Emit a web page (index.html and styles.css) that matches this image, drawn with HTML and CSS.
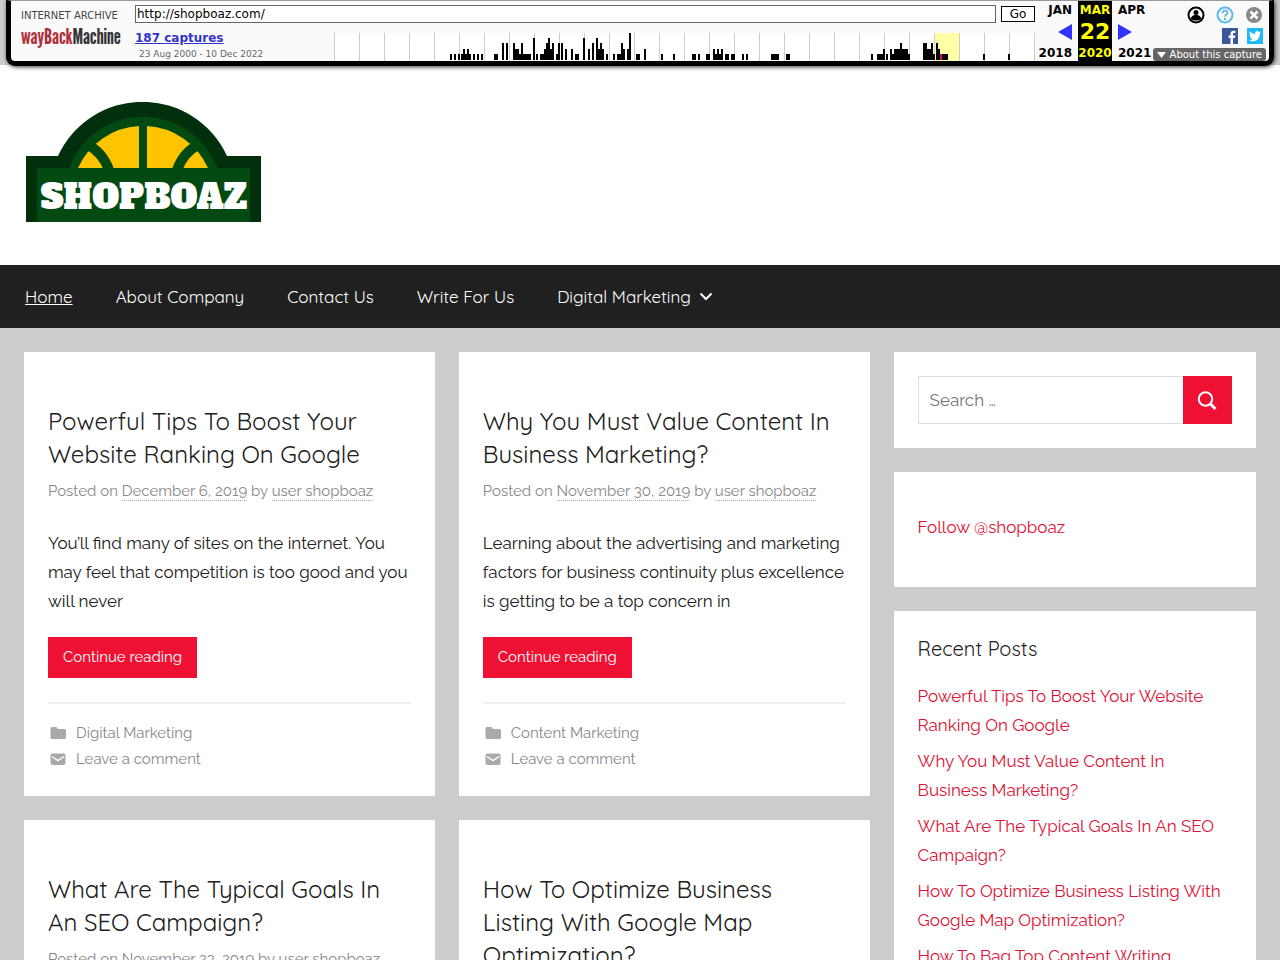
FILE: index.html
```html
<!DOCTYPE html>
<html lang="en">
<head>
    <meta charset="UTF-8">
    <meta name="viewport" content="width=device-width, initial-scale=1.0">
    <title>Shopboaz</title>
    <link rel="stylesheet" href="styles.css">
</head>
<body>
    <!-- Archive toolbar -->
    <div class="archive-bar">
        <a class="archive-logo" href="#">
            <svg width="104" height="44" viewBox="0 0 104 44">
                <text class="logo-small" x="0" y="9">INTERNET ARCHIVE</text>
                <text class="logo-big" x="0" y="34"><tspan fill="#b0303a">wayBack</tspan><tspan fill="#333">Machine</tspan></text>
            </svg>
        </a>
        <div class="archive-main">
            <form class="archive-form">
                <input type="text" class="archive-url" aria-label="Archive URL" value="http://shopboaz.com/">
                <button type="button" class="archive-go">Go</button>
            </form>
            <div class="archive-row">
                <div class="captures">
                    <a href="#">187 captures</a>
                    <div class="range">23 Aug 2000 - 10 Dec 2022</div>
                </div>
                <svg class="sparkline" viewBox="0 0 701 28" preserveAspectRatio="none">
                    <path fill="#fff" d="M0 0h701v28H0z"/>
                    <path fill="#ffffa5" d="M600 0h25v28h-25z"/>
                    <path stroke="#ccc" d="M.5 0v28M25.500 0v28M50.500 0v28M75.500 0v28M100.500 0v28M125.500 0v28M150.500 0v28M175.500 0v28M200.500 0v28M225.500 0v28M250.500 0v28M275.500 0v28M300.500 0v28M325.500 0v28M350.500 0v28M375.500 0v28M400.500 0v28M425.500 0v28M450.500 0v28M475.500 0v28M500.500 0v28M525.500 0v28M550.500 0v28M575.500 0v28M600.500 0v28M625.500 0v28M650.500 0v28M675.500 0v28M700.500 0v28"/>
                    <path stroke="#000" stroke-width="6" d="M116 24h2m2 0h2m2 0h2m1 0h10m2 0h2m2 0h2m2 0h2M160 24h4M185 24h2m2 0h8M202 24h2m2 0h4M222 24h2M241 24h4M272 24h2M279 24h2m2 0h4M302 24h4M327 24h2M339 24h2M358 24h4m2 0h2M372 24h4M381 24h8m2 0h4m2 0h4M408 24h2m2 0h2M437 24h8M452 24h4M537 24h2M543 24h8m1 0h2m2 0h20M599 24h2M608 24h6M649 24h2M674 24h2"/>
                    <path stroke="#000" stroke-width="11" d="M129 21.500h2m2 0h2M181 21.500h4M210 21.500h10M231 21.500h2M237 21.500h2M254 21.500h2M264 21.500h6M287 21.500h4m2 0h4M310 21.500h2M379 21.500h2m2 0h2m2 0h2M549 21.500h2M556 21.500h2m2 0h14M593 21.500h4M604 21.500h2"/>
                    <path stroke="#000" stroke-width="17" d="M168 18.500h2m2 0h2M179 18.500h2M187 18.500h2M212 18.500h4m2 0h2M224 18.500h2m1 0h2M258 18.500h2M266 18.500h2M287 18.500h2M566 18.500h2M589 18.500h4m4 0h2m3 0h2"/>
                    <path stroke="#000" stroke-width="22" d="M199 16h2M214 16h2M249 16h2M262 16h2"/>
                    <path fill="#000" d="M295 0h2v27h-2z"/>
                    <path fill="#e0006e" d="M606 21h2v6h-2z"/>
                </svg>
            </div>
        </div>
        <div class="archive-dates">
            <div class="date prev">
                <a href="#">JAN</a>
                <svg width="14" height="16" viewBox="0 0 14 16"><path fill="#33f" d="M14 0v16L0 8z"/></svg>
                <b>2018</b>
            </div>
            <div class="date now">
                <b>MAR</b>
                <b class="day">22</b>
                <b>2020</b>
            </div>
            <div class="date next">
                <a href="#">APR</a>
                <svg width="14" height="16" viewBox="0 0 14 16"><path fill="#33f" d="M0 0v16l14-8z"/></svg>
                <b>2021</b>
            </div>
        </div>
        <div class="archive-tools">
            <div class="tool-row top">
                <svg width="18" height="18" viewBox="0 0 18 18"><circle cx="9" cy="9" r="7.500" fill="none" stroke="#000" stroke-width="2"/><circle cx="9" cy="6.500" r="2.500"/><path d="M4 13c0-3 2-4 5-4s5 1 5 4c-3 2-7 2-10 0z"/></svg>
                <svg width="18" height="18" viewBox="0 0 18 18"><circle cx="9" cy="9" r="7.500" fill="none" stroke="#5db8f0" stroke-width="2"/><path d="M6.500 7.200c0-3.600 5-3.200 5-.4C11.500 8.600 9 8.600 9 10.800" fill="none" stroke="#5db8f0" stroke-width="1.800"/><circle cx="9" cy="13" r="1.200" fill="#5db8f0"/></svg>
                <svg width="18" height="18" viewBox="0 0 18 18"><circle cx="9" cy="9" r="8" fill="#888"/><path d="M5.500 5.500l7 7m0-7l-7 7" stroke="#fff" stroke-width="2.500"/></svg>
            </div>
            <div class="tool-row">
                <svg width="16" height="16" viewBox="0 0 16 16"><path fill="#3b5998" d="M0 0h16v16H0z"/><path fill="#fff" d="M8.500 16v-6H6.600V7.600h1.900V6c0-2.300 1.200-3.300 3-3.300h1.900V5H12c-.8 0-1 .4-1 1v1.600h2.300L13 10h-2v6z"/></svg>
                <svg width="16" height="16" viewBox="0 0 16 16"><path fill="#1dbaf5" d="M0 0h16v16H0z"/><path fill="#fff" d="M14 4.300c-.5.200-.9.300-1.400.4.500-.3.900-.8 1.100-1.400-.5.300-1 .5-1.600.6C10.500 2.200 7.500 3.400 8 6.200 6 6.100 4.100 5.100 2.900 3.600c-.8 1.300-.3 2.600.7 3.400-.4 0-.8-.1-1.100-.3 0 1.200.9 2.200 2 2.500-.4.100-.7.100-1.100 0 .3 1 1.200 1.700 2.300 1.700-1 .8-2.300 1.200-3.700 1.100 5.300 3.200 11-.4 10.800-6.300.5-.4.900-.8 1.200-1.400z"/></svg>
            </div>
            <button type="button" class="about"><svg width="9" height="6" viewBox="0 0 9 6"><path fill="#fff" d="M0 0h9L4.500 6z"/></svg>About this capture</button>
        </div>
    </div>

    <header class="site-header">
        <a href="#" class="site-logo">
            <svg width="235" height="120" viewBox="0 0 235 120">
                <path fill="#022f0c" d="M0 54h32A93 93 0 0 1 201 54h34v66H0z"/>
                <path fill="#034a12" d="M11 66h32A79 79 0 0 1 191 66h33v54H11z"/>
                <path fill="#ffc400" d="M52 66A71 71 0 0 1 113 24v42zM182 66A71 71 0 0 0 121 24v42z"/>
                <path fill="none" stroke="#034a12" stroke-width="10" d="M62 43c10 5 17 14 21 25M172 43c-10 5-17 14-21 25"/>
                <text class="brand" x="118" y="107" text-anchor="middle">SHOPBOAZ</text>
            </svg>
        </a>
    </header>

    <nav class="main-nav">
        <a href="#" class="current">Home</a>
        <a href="#">About Company</a>
        <a href="#">Contact Us</a>
        <a href="#">Write For Us</a>
        <a href="#">Digital Marketing <svg width="14" height="9" viewBox="0 0 14 9"><path d="M1.500 1.500L7 7l5.500-5.500" fill="none" stroke="#fff" stroke-width="2"/></svg></a>
    </nav>

    <div class="site-content">
        <main class="posts">
            <article class="post">
                <h2><a href="#">Powerful Tips To Boost Your Website Ranking On Google</a></h2>
                <div class="meta">Posted on <a href="#">December 6, 2019</a> by <a href="#">user shopboaz</a></div>
                <p>You’ll find many of sites on the internet. You may feel that competition is too good and you will never</p>
                <a href="#" class="more">Continue reading</a>
                <footer>
                    <div><svg width="20" height="20" viewBox="0 0 20 20"><path fill="#aaa" d="M4 4h4.500L10 6h6.500q1.500 0 1.500 1.500v7q0 1.500-1.500 1.500H4q-1.500 0-1.500-1.500v-9Q2.500 4 4 4z"/></svg><a href="#">Digital Marketing</a></div>
                    <div><svg width="20" height="20" viewBox="0 0 20 20"><rect x="2.500" y="4.500" width="15" height="11.500" rx="2" fill="#aaa"/><path d="M4 7.500l6 4 6-4" fill="none" stroke="#fff" stroke-width="1.500"/></svg><a href="#">Leave a comment</a></div>
                </footer>
            </article>
            <article class="post">
                <h2><a href="#">Why You Must Value Content In Business Marketing?</a></h2>
                <div class="meta">Posted on <a href="#">November 30, 2019</a> by <a href="#">user shopboaz</a></div>
                <p>Learning about the advertising and marketing factors for business continuity plus excellence is getting to be a top concern in</p>
                <a href="#" class="more">Continue reading</a>
                <footer>
                    <div><svg width="20" height="20" viewBox="0 0 20 20"><path fill="#aaa" d="M4 4h4.500L10 6h6.500q1.500 0 1.500 1.500v7q0 1.500-1.500 1.500H4q-1.500 0-1.500-1.500v-9Q2.500 4 4 4z"/></svg><a href="#">Content Marketing</a></div>
                    <div><svg width="20" height="20" viewBox="0 0 20 20"><rect x="2.500" y="4.500" width="15" height="11.500" rx="2" fill="#aaa"/><path d="M4 7.500l6 4 6-4" fill="none" stroke="#fff" stroke-width="1.500"/></svg><a href="#">Leave a comment</a></div>
                </footer>
            </article>
            <article class="post">
                <h2><a href="#">What Are The Typical Goals In An SEO Campaign?</a></h2>
                <div class="meta">Posted on <a href="#">November 23, 2019</a> by <a href="#">user shopboaz</a></div>
            </article>
            <article class="post">
                <h2><a href="#">How To Optimize Business Listing With Google Map Optimization?</a></h2>
            </article>
        </main>

        <aside class="sidebar">
            <section class="widget">
                <form class="search">
                    <input type="search" placeholder="Search …" aria-label="Search">
                    <button type="button" aria-label="Search"><svg width="22" height="22" viewBox="0 0 22 22"><circle cx="8.500" cy="10" r="6.700" fill="none" stroke="#fff" stroke-width="2"/><path d="M13 14.500l5.500 5.500" stroke="#fff" stroke-width="3"/></svg></button>
                </form>
            </section>
            <section class="widget follow">
                <a href="#">Follow @shopboaz</a>
            </section>
            <section class="widget">
                <h3>Recent Posts</h3>
                <ul>
                    <li><a href="#">Powerful Tips To Boost Your Website Ranking On Google</a></li>
                    <li><a href="#">Why You Must Value Content In Business Marketing?</a></li>
                    <li><a href="#">What Are The Typical Goals In An SEO Campaign?</a></li>
                    <li><a href="#">How To Optimize Business Listing With Google Map Optimization?</a></li>
                    <li><a href="#">How To Bag Top Content Writing</a></li>
                </ul>
            </section>
        </aside>
    </div>
</body>
</html>
```
FILE: styles.css
```css
:root {
    --accent: #ee1133;
    --link: #dd1133;
    --dark: #202020;
    --muted: #888;
    --body-font: Raleway, Lato, sans-serif;
    --title-font: Quicksand, Lato, sans-serif;
}
* {
    box-sizing: border-box;
}
body {
    margin: 0;
    background: #ccc;
    color: var(--dark);
    font-family: var(--body-font);
    font-size: 17px;
    line-height: 29px;
}
a {
    color: inherit;
    text-decoration: none;
}
svg {
    display: block;
    flex: none;
}

/* Archive toolbar */
.archive-bar {
    position: relative;
    display: flex;
    height: 66px;
    margin: 0 6px -1px;
    padding: 0 3px 0 10px;
    background: #fafafa;
    border: 5px solid #000;
    border-top: 1px solid #999;
    border-radius: 0 0 9px 9px;
    box-shadow: 1px 1px 4px #333;
    font-family: "DejaVu Sans", sans-serif;
    font-size: 12px;
    line-height: 16px;
    color: #000;
}
.archive-logo {
    width: 114px;
    padding-top: 9px;
}
.logo-small {
    font-size: 10px;
    fill: #444;
}
.logo-big {
    font: 22px "League Gothic", "Bebas Neue", Anton, Oswald, "Liberation Sans", sans-serif;
}
.archive-main {
    flex: 1;
}
.archive-form {
    display: flex;
    align-items: center;
    gap: 5px;
    padding-top: 4px;
}
.archive-url {
    flex: 1;
    height: 18px;
    padding: 0 1px;
    border: 1px solid #666;
    background: #fff;
    font: inherit;
}
.archive-go {
    width: 34px;
    height: 16px;
    padding: 0;
    border: 1px solid #000;
    background: #fff;
    font: inherit;
    line-height: 14px;
}
.archive-row {
    display: flex;
    padding-top: 10px;
}
.captures {
    width: 199px;
    margin-top: -3px;
}
.captures a {
    display: block;
    color: #33c;
    font-weight: bold;
    text-decoration: underline;
}
.range {
    padding-left: 4px;
    font-size: 9px;
    color: #666;
}
.sparkline {
    flex: 1;
    height: 28px;
}
.archive-dates {
    display: flex;
    font-weight: bold;
}
.date {
    display: flex;
    flex-direction: column;
    justify-content: space-between;
    width: 41px;
    padding-top: 1px;
}
.prev {
    align-items: flex-end;
    width: 43px;
    padding-right: 6px;
}
.now {
    align-items: center;
    width: 34px;
    background: #000;
    color: #ff0;
}
.next {
    padding-left: 6px;
}
.day {
    font-size: 22px;
}
.archive-tools {
    display: flex;
    flex-direction: column;
    align-items: flex-end;
    width: 113px;
}
.tool-row {
    display: flex;
    gap: 9px;
    padding-right: 3px;
}
.tool-row.top {
    gap: 11px;
    padding: 5px 3px 4px 0;
}
.about {
    display: flex;
    align-items: center;
    gap: 4px;
    height: 14px;
    margin-top: 4px;
    padding: 0 4px;
    border: 0;
    border-radius: 3px;
    background: #666;
    color: #fff;
    font: 10px "DejaVu Sans", sans-serif;
    white-space: nowrap;
}

/* Header and menu */
.site-header {
    padding: 37px 26px 43px;
    background: #fff;
}
.site-logo {
    display: inline-block;
    vertical-align: top;
}
.brand {
    font: 34px "Alfa Slab One", "DejaVu Serif", serif;
    fill: #fff;
}
.main-nav {
    display: flex;
    gap: 43px;
    padding: 17px 25px;
    background: var(--dark);
    color: #fff;
    font-family: var(--title-font);
}
.main-nav a {
    display: flex;
    align-items: center;
    gap: 8px;
}
.main-nav .current {
    text-decoration: underline;
}

/* Content */
.site-content {
    display: grid;
    grid-template-columns: 7fr 3fr;
    gap: 24px;
    padding: 24px;
}
.posts {
    display: grid;
    grid-template-columns: 1fr 1fr;
    align-content: start;
    gap: 24px;
}
.post {
    padding: 53px 24px 24px;
    background: #fff;
}
.post h2 {
    margin: 0 0 7px;
    font: 24px/33px var(--title-font);
}
.meta {
    color: var(--muted);
    font-size: 15px;
    line-height: 26px;
}
.meta a {
    border-bottom: 1px dotted #aaa;
}
.post p {
    margin: 25px 0 21px;
}
.more {
    display: inline-block;
    padding: 6px 15px;
    background: var(--accent);
    color: #fff;
    font-size: 15px;
    vertical-align: top;
}
.post footer {
    margin-top: 24px;
    padding-top: 16px;
    border-top: 2px solid #eee;
    color: var(--muted);
    font-size: 15px;
    line-height: 26px;
}
.post footer div {
    display: flex;
    align-items: center;
    gap: 8px;
}

/* Sidebar */
.sidebar {
    display: flex;
    flex-direction: column;
    gap: 24px;
}
.widget {
    padding: 24px;
    background: #fff;
}
.widget a {
    color: var(--link);
}
.follow {
    padding: 41px 24px 45px;
}
.search {
    display: flex;
}
.search input {
    flex: 1;
    min-width: 0;
    height: 48px;
    padding: 0 11px;
    border: 1px solid #ddd;
    border-right: 0;
    border-radius: 0;
    font: inherit;
}
.search button {
    display: flex;
    align-items: center;
    justify-content: center;
    width: 49px;
    padding: 0;
    border: 0;
    background: var(--accent);
}
.widget h3 {
    margin: 0 0 19px;
    font: 20px/28px var(--title-font);
}
.widget ul {
    margin: 0;
    padding: 0;
    list-style: none;
}
.widget li {
    margin-bottom: 7px;
}
```
